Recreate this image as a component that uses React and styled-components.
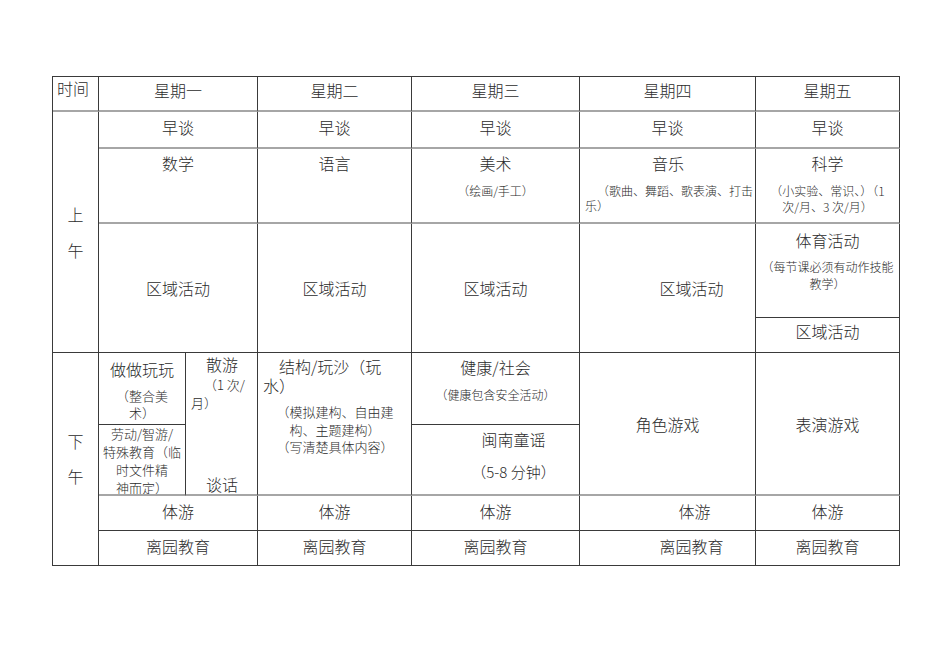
import React from 'react';
import styled, { createGlobalStyle } from 'styled-components';

const GlobalStyle = createGlobalStyle`
  html, body {
    margin: 0;
    background: #fff;
  }
  body {
    font-family: "Noto Sans CJK SC", "Noto Sans", sans-serif;
    color: #2b2b2b;
  }
`;

const Page = styled.div`
  padding: 76px 0 0 52px;
`;

const Sheet = styled.div`
  display: grid;
  grid-template-columns: 46px 87px 72px 154px 168px 176px 144px;
  grid-template-rows: 35px 37px 75px 94px 35px 72px 71px 35px 35px;
  width: max-content;
  border-top: 1px solid #3a3a3a;
  border-left: 1px solid #3a3a3a;
`;

const Cell = styled.div`
  grid-column: ${p => p.$col};
  grid-row: ${p => p.$row};
  box-sizing: border-box;
  min-width: 0;
  overflow: hidden;
  border-right: 1px solid #3a3a3a;
  border-bottom: ${p => (p.$line === 'gray' ? '2px solid #a6a6a6' : '1px solid #3a3a3a')};
  display: flex;
  flex-direction: column;
  font-size: 16px;
  line-height: 20px;
  font-weight: 300;
`;

const TimeCell = styled(Cell)`
  padding: 1px 0 0 4px;
  align-items: flex-start;
`;

const HeadCell = styled(Cell)`
  padding-top: 3px;
  align-items: center;
`;

const PeriodCell = styled(Cell)`
  align-items: center;
  justify-content: center;
  line-height: ${p => p.$lh}px;
  text-align: center;
`;

const SlotCell = styled(Cell)`
  align-items: center;
  justify-content: center;
  padding-left: ${p => p.$shift || 0}px;
  padding-bottom: ${p => p.$lift || 0}px;
`;

const LessonCell = styled(Cell)`
  align-items: center;
  padding: ${p => p.$top || 0}px 0 0 ${p => p.$shift || 0}px;
  text-align: center;
`;

const FlowCell = styled(Cell)`
  padding: ${p => p.$top || 0}px 4px 0 5px;
`;

const Title = styled.div`
  font-size: 16px;
  line-height: ${p => p.$lh || 20}px;
  text-align: ${p => p.$align || 'center'};
  text-indent: ${p => p.$indent || 0};
  white-space: nowrap;
`;

const Note = styled.div`
  align-self: stretch;
  font-size: ${p => p.$size || 12}px;
  line-height: ${p => p.$lh || 16}px;
  margin-top: ${p => p.$gap || 0}px;
  text-align: ${p => p.$align || 'center'};
  text-indent: ${p => p.$indent || 0};
  white-space: nowrap;
`;

const Bottom = styled.div`
  margin-top: auto;
  text-align: center;
  font-size: 16px;
  line-height: 20px;
`;

const days = [
  { name: '星期一', col: '2 / 4' },
  { name: '星期二', col: '4' },
  { name: '星期三', col: '5' },
  { name: '星期四', col: '6' },
  { name: '星期五', col: '7' },
];

const afternoonPlay = [0, 0, 0, 54, 0];
const leaving = [0, 0, 0, 48, 0];

export default function App() {
  return (
    <>
      <GlobalStyle />
      <Page>
        <Sheet>
          <TimeCell $col="1" $row="1" $line="gray">时间</TimeCell>
          {days.map(d => (
            <HeadCell key={d.name} $col={d.col} $row="1" $line="gray">{d.name}</HeadCell>
          ))}

          <PeriodCell $col="1" $row="2 / 6" $lh={36}>上<br />午</PeriodCell>

          {days.map(d => (
            <SlotCell key={'zt' + d.name} $col={d.col} $row="2" $line="gray" $lift={5}>早谈</SlotCell>
          ))}

          <LessonCell $col="2 / 4" $row="3" $line="gray" $top={4}>
            <Title>数学</Title>
          </LessonCell>
          <LessonCell $col="4" $row="3" $line="gray" $top={4}>
            <Title>语言</Title>
          </LessonCell>
          <LessonCell $col="5" $row="3" $line="gray" $top={4}>
            <Title>美术</Title>
            <Note $gap={10}>（绘画/手工）</Note>
          </LessonCell>
          <FlowCell $col="6" $row="3" $line="gray" $top={4}>
            <Title>音乐</Title>
            <Note $gap={10} $align="left" $indent="1em" $lh={15}>
              （歌曲、舞蹈、歌表演、打击<br />乐）
            </Note>
          </FlowCell>
          <LessonCell $col="7" $row="3" $line="gray" $top={4}>
            <Title>科学</Title>
            <Note $gap={10}>
              （小实验、常识、）（1<br />次/月、3 次/月）
            </Note>
          </LessonCell>

          <SlotCell $col="2 / 4" $row="4 / 6">区域活动</SlotCell>
          <SlotCell $col="4" $row="4 / 6">区域活动</SlotCell>
          <SlotCell $col="5" $row="4 / 6">区域活动</SlotCell>
          <SlotCell $col="6" $row="4 / 6" $shift={48}>区域活动</SlotCell>
          <LessonCell $col="7" $row="4" $top={6}>
            <Title>体育活动</Title>
            <Note $gap={8} $lh={17}>
              （每节课必须有动作技能<br />教学）
            </Note>
          </LessonCell>
          <SlotCell $col="7" $row="5" $lift={8}>区域活动</SlotCell>

          <PeriodCell $col="1" $row="6 / 10" $lh={35}>下<br />午</PeriodCell>

          <LessonCell $col="2" $row="6" $top={6}>
            <Title>做做玩玩</Title>
            <Note $size={13} $lh={17} $gap={8}>（整合美<br />术）</Note>
          </LessonCell>
          <LessonCell $col="2" $row="7" $line="gray">
            <Note $size={13} $lh={18}>
              劳动/智游/<br />特殊教育（临<br />时文件精<br />神而定）
            </Note>
          </LessonCell>
          <FlowCell $col="3" $row="6 / 8" $line="gray" $top={1}>
            <Title>散游</Title>
            <Note $size={13} $lh={18} $gap={2} $align="left" $indent="1em">
              （1 次/<br />月）
            </Note>
            <Bottom>谈话</Bottom>
          </FlowCell>
          <FlowCell $col="4" $row="6 / 8" $line="gray" $top={4}>
            <Title $lh={19} $align="left" $indent="1em">
              结构/玩沙（玩<br />水）
            </Title>
            <Note $size={13} $lh={17.5} $gap={8}>
              （模拟建构、自由建<br />构、主题建构）<br />（写清楚具体内容）
            </Note>
          </FlowCell>
          <LessonCell $col="5" $row="6" $top={4}>
            <Title>健康/社会</Title>
            <Note $gap={10}>（健康包含安全活动）</Note>
          </LessonCell>
          <LessonCell $col="5" $row="7" $line="gray" $top={4} $shift={36}>
            <Title>闽南童谣</Title>
            <Note $size={15} $lh={20} $gap={13}>（5-8 分钟）</Note>
          </LessonCell>
          <SlotCell $col="6" $row="6 / 8" $line="gray">角色游戏</SlotCell>
          <SlotCell $col="7" $row="6 / 8" $line="gray">表演游戏</SlotCell>

          {days.map((d, i) => (
            <SlotCell key={'ty' + d.name} $col={d.col} $row="8" $shift={afternoonPlay[i]} $lift={5}>体游</SlotCell>
          ))}
          {days.map((d, i) => (
            <SlotCell key={'ly' + d.name} $col={d.col} $row="9" $shift={leaving[i]} $lift={5}>离园教育</SlotCell>
          ))}
        </Sheet>
      </Page>
    </>
  );
}
